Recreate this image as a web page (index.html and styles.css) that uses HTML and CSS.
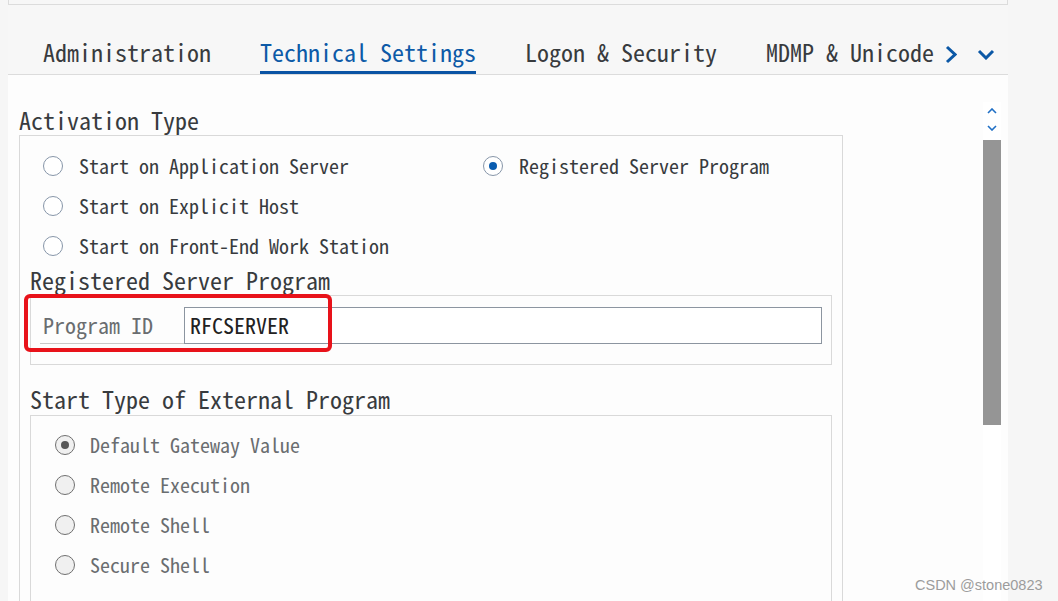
FILE: index.html
```html
<!DOCTYPE html>
<html>
<head>
<meta charset="utf-8">
<title>Technical Settings</title>
<link rel="stylesheet" href="styles.css">
</head>
<body>
<div class="panel">
  <div class="topbox"></div>
  <div class="tabbar">
    <span class="tab">Administration</span>
    <span class="tab active">Technical Settings</span>
    <span class="tab">Logon &amp; Security</span>
    <span class="tab last">MDMP &amp; Unicode</span>
    <svg class="nav-next" width="12" height="19" viewBox="0 0 12 19"><polyline points="2,2 10,9.5 2,17" fill="none" stroke="#0b58a6" stroke-width="3"/></svg>
    <svg class="nav-more" width="18" height="11" viewBox="0 0 18 11"><polyline points="2,2 9,9 16,2" fill="none" stroke="#0b58a6" stroke-width="3"/></svg>
  </div>
  <div class="content">
    <div class="scrollarea">
      <div class="label">Activation Type</div>
      <div class="group">
        <div class="radios">
          <div class="radio-item"><span class="rb"></span><span>Start on Application Server</span></div>
          <div class="radio-item"><span class="rb on"></span><span>Registered Server Program</span></div>
          <div class="radio-item"><span class="rb"></span><span>Start on Explicit Host</span></div>
          <div class="radio-item"></div>
          <div class="radio-item"><span class="rb"></span><span>Start on Front-End Work Station</span></div>
        </div>
        <div class="sublabel">Registered Server Program</div>
        <div class="subgroup prog">
          <div class="field">
            <span class="flabel">Program ID</span>
            <div class="input">RFCSERVER</div>
          </div>
          <div class="highlight"></div>
        </div>
        <div class="sublabel second">Start Type of External Program</div>
        <div class="subgroup starts">
          <div class="radio-item dis"><span class="rb on"></span><span>Default Gateway Value</span></div>
          <div class="radio-item dis"><span class="rb"></span><span>Remote Execution</span></div>
          <div class="radio-item dis"><span class="rb"></span><span>Remote Shell</span></div>
          <div class="radio-item dis"><span class="rb"></span><span>Secure Shell</span></div>
        </div>
      </div>
    </div>
    <div class="scrollbar">
      <div class="sb-btn"><svg width="10" height="6" viewBox="0 0 10 6"><polyline points="1,5 5,1 9,5" fill="none" stroke="#1f6fc5" stroke-width="1.6"/></svg></div>
      <div class="sb-btn"><svg width="10" height="6" viewBox="0 0 10 6"><polyline points="1,1 5,5 9,1" fill="none" stroke="#1f6fc5" stroke-width="1.6"/></svg></div>
      <div class="thumb"></div>
    </div>
  </div>
</div>
<div class="watermark">CSDN @stone0823</div>
</body>
</html>
```
FILE: styles.css
```css
* { box-sizing: border-box; }
html, body { margin: 0; padding: 0; }
body {
  width: 1058px;
  height: 601px;
  overflow: hidden;
  position: relative;
  background: #f6f6f6;
  font-family: "Noto Sans Mono CJK SC", "Liberation Mono", monospace;
  color: #383b3e;
}
.panel {
  margin-left: 8px;
  width: 1000px;
  height: 601px;
  display: flex;
  flex-direction: column;
}
.topbox {
  height: 5px;
  flex: none;
  border: 1px solid #dcdcdc;
  border-top: none;
  background: #f7f7f7;
}
.tabbar {
  flex: none;
  height: 70px;
  background: #f7f7f7;
  border-bottom: 1px solid #dcdcdc;
  display: flex;
  align-items: flex-start;
  padding: 35px 0 0 35px;
}
.tab {
  font-size: 24px;
  line-height: 24px;
  height: 34px;
  padding-bottom: 7px;
  border-bottom: 3px solid transparent;
  margin-right: 49px;
  white-space: nowrap;
  color: #383b3e;
}
.tab.active { color: #0d5aa7; border-bottom-color: #0a54a4; }
.tab.last { margin-right: 0; }
.nav-next { margin: 5px 0 0 11px; flex: none; }
.nav-more { margin: 9px 0 0 20px; flex: none; }

.content {
  flex: 1;
  display: flex;
  background: #fdfdfd;
  padding-right: 7px;
  overflow: hidden;
}
.scrollarea {
  flex: 1;
  padding: 33px 0 0 11px;
}
.label, .sublabel {
  font-size: 24px;
  line-height: 24px;
  height: 24px;
  white-space: nowrap;
  color: #383b3e;
}
.label { margin-bottom: 3px; }
.sublabel { margin: 2px 0 3px 10px; }
.sublabel.second { margin: 22px 0 4px 10px; }

.group {
  width: 824px;
  height: 480px;
  border: 1px solid #d9d9d9;
  border-bottom: none;
  padding-top: 10px;
}
.radios {
  display: grid;
  grid-template-columns: 440px 1fr;
  padding-left: 23px;
}
.radio-item {
  height: 40px;
  display: flex;
  align-items: center;
  gap: 16px;
  font-size: 20px;
  line-height: 20px;
  white-space: nowrap;
  color: #383b3e;
}
.rb {
  flex: none;
  width: 20px;
  height: 20px;
  border-radius: 50%;
  border: 1.5px solid #8796a9;
  background: #fff;
  display: flex;
  align-items: center;
  justify-content: center;
}
.rb.on::after {
  content: "";
  width: 8px;
  height: 8px;
  border-radius: 50%;
  background: #0a5db0;
}
.radio-item.dis { color: #6a6d70; gap: 15px; }
.radio-item.dis .rb { border-color: #707070; background: #f0f0f0; }
.radio-item.dis .rb.on::after { background: #585858; }

.subgroup {
  margin: 0 10px;
  border: 1px solid #d9d9d9;
}
.prog {
  position: relative;
  padding: 11px 9px 20px 9px;
}
.field {
  display: flex;
  height: 37px;
}
.flabel {
  flex: none;
  width: 144px;
  height: 37px;
  border-bottom: 1px solid #c8c8c8;
  font-size: 22px;
  line-height: 34px;
  padding: 0 0 2px 3px;
  color: #6a6d70;
  white-space: nowrap;
}
.input {
  flex: 1;
  height: 37px;
  border: 1px solid #8c95a0;
  background: #fff;
  font-size: 22px;
  line-height: 33px;
  padding-left: 5px;
  color: #222;
}
.highlight {
  position: absolute;
  left: -7px;
  top: -2px;
  width: 308px;
  height: 58px;
  border: 4px solid #e8121a;
  border-radius: 6px;
}
.starts {
  height: 300px;
  border-bottom: none;
  padding: 9px 0 0 24px;
}

.scrollbar {
  flex: none;
  width: 18px;
  margin-top: 27px;
  background: #ffffff;
  display: flex;
  flex-direction: column;
  align-items: center;
}
.sb-btn {
  height: 17px;
  width: 18px;
  display: flex;
  align-items: center;
  justify-content: center;
}
.thumb {
  margin-top: 4px;
  width: 18px;
  height: 285px;
  background: #959595;
}
.watermark {
  position: absolute;
  left: 915px;
  top: 577px;
  font-family: "Liberation Sans", Arial, sans-serif;
  font-size: 14.5px;
  color: #9c9c9c;
  white-space: nowrap;
}
```
